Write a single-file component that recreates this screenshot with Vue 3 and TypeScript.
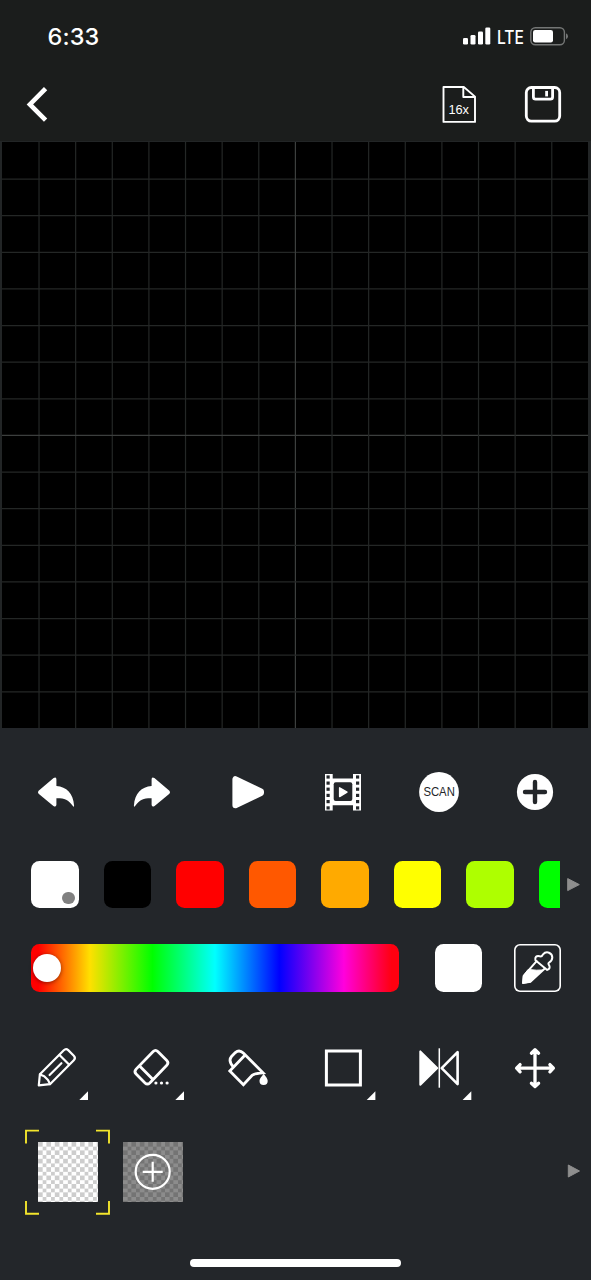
<script setup lang="ts">
import { ref } from 'vue'

const swatches = ['#ffffff', '#000000', '#ff0000', '#ff5800', '#ffaa00', '#ffff00', '#aeff00', '#00ff00']
const selected = ref(0)
const cells = 16
const size = 586
const step = size / cells
const lines = Array.from({ length: cells - 1 }, (_, i) => (i + 1) * step + 0.4)
</script>

<template>
  <main class="app">
    <header class="top">
      <div class="status">
        <span class="time">6:33</span>
        <div class="signals">
          <svg class="bars" width="28" height="18" viewBox="0 0 28 18" fill="#fff">
            <rect x="0" y="11" width="5" height="6.5" rx="1.3" />
            <rect x="7.5" y="8" width="5" height="9.5" rx="1.3" />
            <rect x="15" y="4.5" width="5" height="13" rx="1.3" />
            <rect x="22.3" y="0.5" width="5" height="17" rx="1.3" />
          </svg>
          <svg class="lte" width="30" height="24" viewBox="0 0 30 24" fill="#fff">
            <text x="0" y="19" textLength="27" lengthAdjust="spacingAndGlyphs">LTE</text>
          </svg>
          <svg class="battery" width="39" height="19" viewBox="0 0 39 19">
            <rect x="0.8" y="0.8" width="33.6" height="17" rx="4.5" fill="none" stroke="#747675" stroke-width="1.4" />
            <rect x="3" y="3" width="20" height="12.4" rx="2.2" fill="#fff" />
            <path d="M36 6.2q2 .8 2 3t-2 3z" fill="#747675" />
          </svg>
        </div>
      </div>
      <nav class="nav">
        <svg class="back" width="24" height="40" viewBox="0 0 24 40" fill="none" stroke="#fff" stroke-width="4.6">
          <path d="M20.6 4.6 4.9 20.4 20.6 36.2" />
        </svg>
        <svg class="doc" width="34" height="38" viewBox="0 0 34 38" fill="none" stroke="#fff" stroke-width="1.9" stroke-linejoin="round">
          <path d="M1.5 2H21.8L33 11.6V36.9H1.5ZM21.3 2V12H33" />
          <text x="16.7" y="29.4" text-anchor="middle" fill="#fff" stroke="none" class="doc-label">16x</text>
        </svg>
        <svg class="save" width="38" height="38" viewBox="0 0 38 38" fill="none" stroke="#fff" stroke-width="2.8">
          <rect x="2.3" y="2.5" width="33.4" height="33.6" rx="5" />
          <path d="M9.4 2.5V12q0 2.2 2.2 2.2H26.4q2.2 0 2.2-2.2V2.5" />
          <path d="M22.6 5.9V11.4" />
        </svg>
      </nav>
    </header>

    <section class="canvas">
      <svg width="586" height="586" viewBox="0 0 586 586">
        <path
          v-for="(p, i) in lines"
          :key="i"
          :d="`M${p} 0V586M0 ${p}H586`"
          :stroke="i === 7 ? '#3c3f3e' : '#242726'"
          stroke-width="1.2"
        />
      </svg>
    </section>

    <section class="row actions">
      <svg class="icon" viewBox="0 0 60 60" fill="#fff">
        <path d="M12.6 28.8 27.6 16.1Q30.4 14.4 30.4 17.5V24.1C40.5 24.8 47.3 31.4 48.1 43.7Q48 45.4 46.9 44C42.4 37.6 37.6 36.1 30.4 36.3V42.8Q30.2 45.6 27.4 44L12.6 31.8Q11.2 30.3 12.6 28.8Z" />
      </svg>
      <svg class="icon" viewBox="0 0 60 60" fill="#fff">
        <path transform="translate(60 0) scale(-1 1)" d="M12.6 28.8 27.6 16.1Q30.4 14.4 30.4 17.5V24.1C40.5 24.8 47.3 31.4 48.1 43.7Q48 45.4 46.9 44C42.4 37.6 37.6 36.1 30.4 36.3V42.8Q30.2 45.6 27.4 44L12.6 31.8Q11.2 30.3 12.6 28.8Z" />
      </svg>
      <svg class="icon" viewBox="0 0 60 60" fill="#fff" stroke="#fff" stroke-width="6" stroke-linejoin="round">
        <path d="M17.4 17.2V43.2L43 31V29.4Z" />
      </svg>
      <svg class="icon" viewBox="0 0 60 60">
        <path d="M12 12H19.7V16.6H40V12H48V48.5H40V43.3H19.7V48.5H12Z" fill="#fff" />
        <rect x="20.7" y="20.3" width="18.6" height="18.8" rx="2" fill="#23262a" />
        <path d="M26.6 25.8V34.6L34 30.2Z" fill="#fff" stroke="#fff" stroke-linejoin="round" stroke-width="1.4" />
        <g fill="#23262a">
          <template v-for="y in [13.4, 19.5, 25.6, 31.8, 38, 44.3]" :key="y">
            <rect x="13.5" :y="y" width="3.2" height="3.2" />
            <rect x="43" :y="y" width="3.2" height="3.2" />
          </template>
        </g>
      </svg>
      <svg class="icon" viewBox="0 0 60 60">
        <circle cx="30" cy="30" r="19.9" fill="#fff" />
        <text x="14.4" y="34.4" textLength="31.4" lengthAdjust="spacingAndGlyphs" class="scan">SCAN</text>
      </svg>
      <svg class="icon" viewBox="0 0 60 60">
        <circle cx="30" cy="30" r="18.1" fill="#fff" />
        <path d="M30 20V40M20 30H40" stroke="#23262a" stroke-width="4.4" stroke-linecap="round" />
      </svg>
    </section>

    <section class="palette">
      <div class="swatches">
        <button
          v-for="(c, i) in swatches"
          :key="c"
          class="swatch"
          :style="{ background: c }"
          @click="selected = i"
        >
          <span v-if="i === selected" class="dot"></span>
        </button>
      </div>
      <svg class="more" width="13" height="14" viewBox="0 0 13 14"><path d="M0.7 0.6V12.6L12.3 6.6Z" fill="#8e8e8e" stroke="#8e8e8e" stroke-linejoin="round" /></svg>
    </section>

    <section class="mixer">
      <div class="hue"><span class="thumb"></span></div>
      <span class="current"></span>
      <button class="dropper">
        <svg width="47" height="47" viewBox="0 0 47 47" fill="none" stroke="#fff" stroke-width="2" stroke-linejoin="round" stroke-linecap="round">
          <path d="M22.6 17.2 9.7 31.8 9 39 16.4 37.7 30.8 24.6" />
          <path d="M14.5 25.5 22.5 26.2 28.5 26 16.4 38 8.8 39.3 9.4 32Z" fill="#fff" stroke-width="1" />
          <path d="M21.4 16.2Q20.6 11.4 25.4 12.2Q27.8 13.2 29 10.4C32.5 6.4 38.4 8.9 38.3 13.7Q38 17 35.3 18.3Q33.5 19.2 35.3 21.7Q36.6 24.7 33.2 25.9Z" />
        </svg>
      </button>
    </section>

    <section class="row tools">
      <svg class="icon" viewBox="0 0 60 60" fill="none" stroke="#fff" stroke-width="2.2" stroke-linejoin="round" stroke-linecap="round">
        <path d="M12.8 47.4 13.9 36.2 37.8 12.2Q40 10 42.2 12.1L47.8 17.7Q50 20 47.8 22.3L24 46.2Z" />
        <path d="M14 36.4 18.2 38.2 22 42 24 46M33.5 17 43 26.5M23.6 37 35.4 25.2" />
        <path d="M53.3 62H62V53.3Z" fill="#fff" stroke="none" />
      </svg>
      <svg class="icon" viewBox="0 0 60 60" fill="none" stroke="#fff" stroke-width="2.8">
        <path d="M31.2 13.5Q33.5 11.2 35.8 13.5L44.8 22.4Q47.2 24.8 44.8 27.2L27.8 44.9Q25.4 47.2 23 44.9L14.1 36Q11.8 33.6 14.1 31.1ZM17.6 28 31 41.6" />
        <g fill="#fff" stroke="none"><circle cx="33.9" cy="45" r="1.6" /><circle cx="39.5" cy="45" r="1.6" /><circle cx="45.1" cy="45" r="1.6" /><path d="M53.3 62H62V53.3Z" /></g>
      </svg>
      <svg class="icon" viewBox="0 0 60 60" fill="none" stroke="#fff" stroke-width="2.8" stroke-linejoin="miter">
        <path d="M26.4 17.7 11.8 33 25.4 46.8 34.2 37.3Q36 35.5 45 34.8L25.3 15.1Q21.3 11.2 17.3 14.6L13.5 18.5Q9.8 23 15.5 29.2" />
        <path d="M45.7 35.4C44.5 38 41.5 39.8 41.5 43a4.1 4.1 0 0 0 8.2 0C49.7 39.8 46.9 38 45.7 35.4Z" fill="#fff" stroke="none" />
      </svg>
      <svg class="icon" viewBox="0 0 60 60" fill="none" stroke="#fff" stroke-width="3">
        <rect x="13.4" y="13" width="34" height="34" />
        <path d="M53.7 62H62.4V53.3Z" fill="#fff" stroke="none" />
      </svg>
      <svg class="icon" viewBox="0 0 60 60" fill="none" stroke="#fff" stroke-linejoin="round">
        <path d="M11.3 13.4V46.8L28.3 30.1Z" fill="#fff" stroke-width="2" />
        <path d="M30.3 10.3V49.7" stroke-width="1.5" />
        <path d="M32.7 30.1 48.6 14.1V46.1Z" stroke-width="2.6" />
        <path d="M53.6 62H62.3V53.3Z" fill="#fff" stroke="none" />
      </svg>
      <svg class="icon" viewBox="0 0 60 60" fill="none" stroke="#fff" stroke-width="3.3" stroke-linecap="round" stroke-linejoin="round">
        <path d="M30 12V48.6M11.7 30.2H48.3M26.4 15.2 30 11.8 33.6 15.2M26.4 45.2 30 48.6 33.6 45.2M15.1 26.6 11.6 30.2 15.1 33.8M44.9 26.6 48.4 30.2 44.9 33.8" />
      </svg>
    </section>

    <section class="layers">
      <div class="layer active">
        <svg class="frame" width="85" height="86" viewBox="0 0 85 86" fill="none" stroke="#f3e52c" stroke-width="1.9">
          <path d="M1 14.5V1.6H14M71 1.6H84V14.5M84 72V84.8H71M14 84.8H1V72" />
        </svg>
        <span class="checker"></span>
      </div>
      <button class="add">
        <svg width="60" height="60" viewBox="0 0 60 60" fill="none" stroke="#fff" stroke-width="2.2">
          <circle cx="29.7" cy="29.8" r="17" />
          <path d="M29.7 19.8V39.8M19.7 29.8H39.7" />
        </svg>
      </button>
      <svg class="more" width="14" height="14" viewBox="0 0 13 14"><path d="M0.8 1V13L12 7Z" fill="#8e8e8e" stroke="#8e8e8e" stroke-linejoin="round" /></svg>
    </section>

    <div class="home"></div>
  </main>
</template>

<style>
body { background: #23262a; }
</style>

<style scoped>
.app {
  width: 591px;
  height: 1280px;
  overflow: hidden;
  background: #23262a;
  color: #fff;
  font-family: Inter, "Liberation Sans", sans-serif;
  display: flex;
  flex-direction: column;
  box-sizing: border-box;
}
svg { display: block; flex: none; }
button { border: 0; padding: 0; margin: 0; background: none; }
.top { height: 141px; background: #1b1d1c; flex: none; }
.status {
  height: 72px;
  display: flex;
  align-items: center;
  justify-content: space-between;
  padding: 0 22px 0 47.5px;
  box-sizing: border-box;
}
.time { font-size: 23.5px; font-weight: 500; letter-spacing: 0.1px; padding-top: 1px; }
.signals { display: flex; align-items: center; }
.lte { font-size: 19px; font-weight: 500; margin: 1px 3px 0 6px; overflow: visible; }
.nav { display: flex; align-items: center; height: 64px; padding: 0 29px 0 24.5px; }
.back { margin-right: auto; }
.doc { margin-right: 48px; }
.doc-label { font-family: "Liberation Sans", sans-serif; font-size: 12.8px; }
.canvas {
  height: 587px;
  flex: none;
  box-sizing: border-box;
  padding: 1px 3px 0 2px;
  background: #222526;
}
.canvas svg { background: #000; }
.row { display: grid; grid-template-columns: repeat(6, 95.83px); justify-items: center; padding-left: 8px; flex: none; }
.actions { margin-top: 34px; height: 60px; }
.icon { width: 60px; height: 60px; overflow: visible; }
.scan { font-family: "Liberation Sans", sans-serif; font-size: 12px; fill: #23262a; }
.palette { margin-top: 39px; height: 47px; display: flex; align-items: center; padding-left: 31.4px; flex: none; }
.swatches { display: flex; gap: 25px; width: 528.2px; overflow: hidden; }
.swatch { width: 47.5px; height: 47px; flex: none; border-radius: 8.5px; position: relative; }
.dot { position: absolute; right: 4.2px; bottom: 4px; width: 12.5px; height: 12.5px; border-radius: 50%; background: #808080; }
.more { margin-left: 7.5px; }
.mixer { margin-top: 36px; height: 47.5px; display: flex; padding-left: 31.4px; flex: none; }
.hue {
  width: 367.2px;
  border-radius: 8.5px;
  display: flex;
  align-items: center;
  background: linear-gradient(90deg, #f00 0, #f00 2%, #ffe000 16%, #0f0 33%, #0ff 50%, #00f 67.5%, #f0d 85%, #ff0010 98%);
}
.thumb { width: 28.5px; height: 28.5px; margin-left: 1.5px; border-radius: 50%; background: #fff; box-shadow: 0 1px 4px rgba(0, 0, 0, 0.45); }
.current { width: 47.5px; margin-left: 36px; background: #fff; border-radius: 8.5px; }
.dropper { width: 47px; margin-left: 31.8px; border-radius: 6px; box-shadow: inset 0 0 0 1.6px #fff; }
.tools { margin-top: 46.5px; height: 60px; }
.layers { margin-top: 31.4px; height: 85px; display: flex; align-items: center; padding: 0 10px 0 25.2px; flex: none; }
.layer { width: 85px; height: 85px; position: relative; display: flex; align-items: center; justify-content: center; }
.frame { position: absolute; inset: 0; }
.checker { width: 60px; height: 60px; background: conic-gradient(#fff 25%, #cdcdcd 0 50%, #fff 0 75%, #cdcdcd 0) 0 0 / 8.4px 8.4px; }
.add { width: 60px; height: 60px; margin-left: 12.5px; background: conic-gradient(#8c8c8c 25%, #747474 0 50%, #8c8c8c 0 75%, #747474 0) 0 0 / 8.4px 8.4px; }
.layers .more { margin: 0 0 1px auto; }
.home { width: 211px; height: 8px; border-radius: 4px; background: #fff; margin: 45px 0 0 190px; flex: none; }
</style>
